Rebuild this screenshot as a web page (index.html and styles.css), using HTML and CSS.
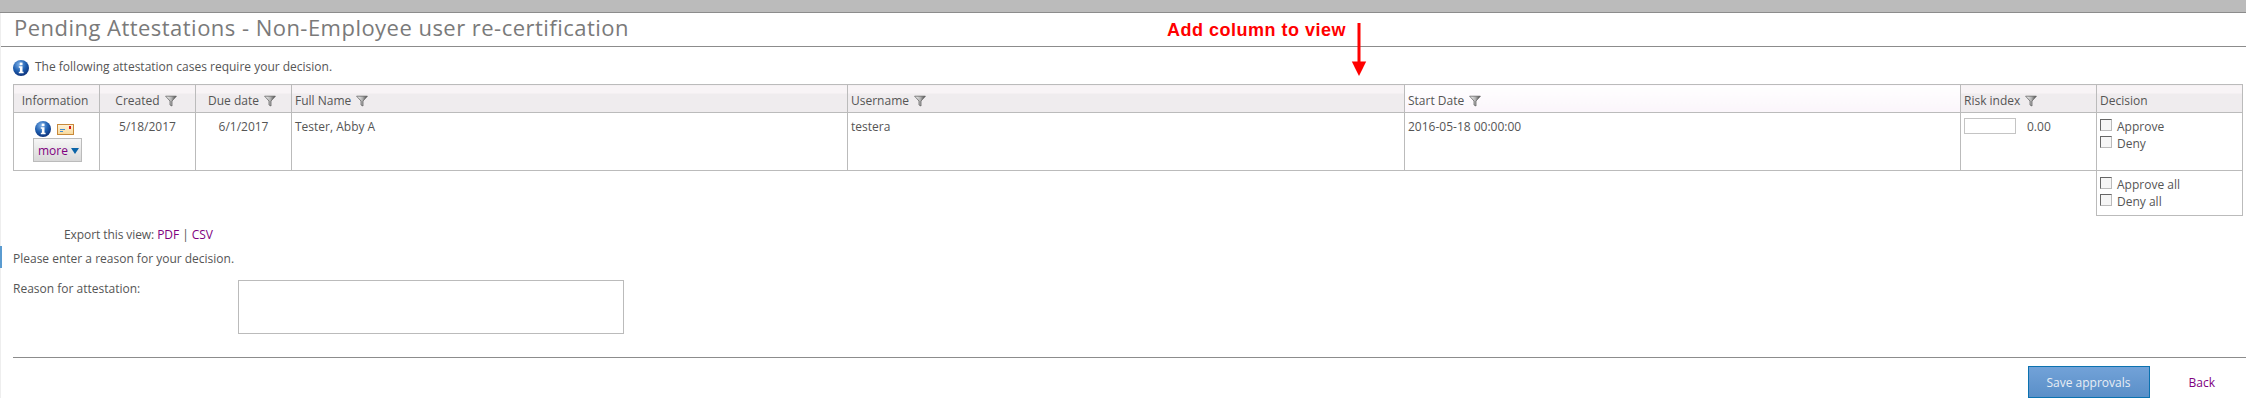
FILE: index.html
```html
<!DOCTYPE html>
<html lang="en">
<head>
  <meta charset="UTF-8">
  <title>Pending Attestations</title>
  <link rel="stylesheet" href="styles.css">
</head>
<body>

  <div class="topbar"></div>

  <div class="page">
    <h1 class="title">Pending Attestations - Non-Employee user re-certification</h1>

    <div class="annotation">
      <span class="annotation-text">Add column to view</span>
      <svg class="annotation-arrow" width="16" height="54" viewBox="0 0 16 54">
        <rect x="6.5" y="0" width="3" height="40" fill="#f00"/>
        <path d="M0.8 38.5H15.2L8 53Z" fill="#f00"/>
      </svg>
    </div>

    <p class="intro">
      <svg class="info-icon" width="16" height="16" viewBox="0 0 16 16">
        <use href="#info"/>
      </svg>
      The following attestation cases require your decision.
    </p>

    <table class="cases">
      <colgroup>
        <col class="col-info">
        <col class="col-date">
        <col class="col-date">
        <col class="col-name">
        <col class="col-user">
        <col class="col-start">
        <col class="col-risk">
        <col class="col-decision">
      </colgroup>
      <thead>
        <tr>
          <th class="center">Information</th>
          <th class="center">Created <svg class="filter" width="12" height="12" viewBox="0 0 12 12"><use href="#funnel"/></svg></th>
          <th class="center">Due date <svg class="filter" width="12" height="12" viewBox="0 0 12 12"><use href="#funnel"/></svg></th>
          <th>Full Name <svg class="filter" width="12" height="12" viewBox="0 0 12 12"><use href="#funnel"/></svg></th>
          <th>Username <svg class="filter" width="12" height="12" viewBox="0 0 12 12"><use href="#funnel"/></svg></th>
          <th class="head-light">Start Date <svg class="filter" width="12" height="12" viewBox="0 0 12 12"><use href="#funnel"/></svg></th>
          <th>Risk index <svg class="filter" width="12" height="12" viewBox="0 0 12 12"><use href="#funnel"/></svg></th>
          <th>Decision</th>
        </tr>
      </thead>
      <tbody>
        <tr class="case-row">
          <td class="center">
            <div class="info-icons">
              <svg width="16" height="16" viewBox="0 0 16 16"><use href="#info"/></svg>
              <svg width="17" height="11" viewBox="0 0 17 11">
                <defs>
                  <linearGradient id="env-fill" x1="0" y1="0" x2="0" y2="1">
                    <stop offset="0" stop-color="#fdf3dc"/>
                    <stop offset="1" stop-color="#f8d898"/>
                  </linearGradient>
                </defs>
                <rect x="0.5" y="0.5" width="16" height="10" fill="url(#env-fill)" stroke="#c8893a"/>
                <rect x="12" y="2" width="2" height="3" fill="#d81818"/>
                <rect x="3" y="5" width="5" height="1" fill="#3d8ad0"/>
                <rect x="3" y="7" width="3" height="1" fill="#3d8ad0"/>
              </svg>
            </div>
            <button class="more" type="button">more <span class="more-caret"></span></button>
          </td>
          <td class="center">5/18/2017</td>
          <td class="center">6/1/2017</td>
          <td>Tester, Abby A</td>
          <td>testera</td>
          <td>2016-05-18 00:00:00</td>
          <td><input class="risk-input" type="text"><span class="risk-value">0.00</span></td>
          <td>
            <label class="check"><input type="checkbox"> Approve</label>
            <label class="check"><input type="checkbox"> Deny</label>
          </td>
        </tr>
        <tr class="all-row">
          <td class="blank" colspan="7"></td>
          <td>
            <label class="check"><input type="checkbox"> Approve all</label>
            <label class="check"><input type="checkbox"> Deny all</label>
          </td>
        </tr>
      </tbody>
    </table>

    <p class="export">Export this view: <a href="#">PDF</a> | <a href="#">CSV</a></p>
    <p class="reason-note">Please enter a reason for your decision.</p>

    <div class="reason">
      <label class="reason-label" for="reason">Reason for attestation:</label>
      <textarea class="reason-box" id="reason"></textarea>
    </div>

    <div class="actions">
      <button class="save" type="button">Save approvals</button>
      <a class="back" href="#">Back</a>
    </div>
  </div>

  <!-- icons used more than once -->
  <svg class="defs" width="0" height="0">
    <defs>
      <radialGradient id="info-fill" cx="40%" cy="28%" r="75%">
        <stop offset="0" stop-color="#7db0e8"/>
        <stop offset="0.55" stop-color="#1f5fb0"/>
        <stop offset="1" stop-color="#0c2f78"/>
      </radialGradient>
      <linearGradient id="funnel-fill" x1="0" y1="0" x2="1" y2="0">
        <stop offset="0" stop-color="#fff"/>
        <stop offset="0.55" stop-color="#b0b0b0"/>
        <stop offset="1" stop-color="#444"/>
      </linearGradient>
      <symbol id="info" viewBox="0 0 16 16">
        <circle cx="8" cy="8" r="8" fill="url(#info-fill)"/>
        <rect x="6.7" y="2.6" width="2.8" height="2.6" fill="#fff"/>
        <path d="M5.8 6.3H9.5V11.8H10.6V13.2H5.8V11.8H6.9V7.7H5.8Z" fill="#fff"/>
      </symbol>
      <symbol id="funnel" viewBox="0 0 12 12">
        <path d="M0.6 1.2H11.4L7 6V11L5 10V6Z" fill="url(#funnel-fill)" stroke="#555" stroke-width="0.7"/>
      </symbol>
    </defs>
  </svg>

</body>
</html>
```

FILE: styles.css
```css
html, body { margin: 0; padding: 0; background: #fff; }
body { font-family: "Open Sans", sans-serif; font-size: 12px; color: #555; height: 416px; overflow: hidden; }
a { color: #800080; text-decoration: none; }
p { margin: 0; }

.topbar { height: 12px; background: #bbb; border-bottom: 1px solid #8c8c8c; }

.page { position: relative; border-left: 1px solid #eee; padding-right: 4px; }

.title {
  margin: 0 -4px 0 0;
  padding: 1px 0 0 13px;
  height: 32px;
  font-size: 22px;
  line-height: 26px;
  font-weight: 400;
  letter-spacing: 0.47px;
  color: #7a7a7a;
  border-bottom: 1px solid #8c8c8c;
}

.annotation { position: absolute; left: 1166px; top: 10px; display: flex; align-items: flex-start; }
.annotation-text {
  width: 184px;
  margin-top: -2px;
  font-family: "Liberation Sans", Arial, sans-serif;
  font-size: 18px;
  line-height: 18px;
  font-weight: bold;
  letter-spacing: 0.5px;
  color: #f00;
  white-space: nowrap;
}

.intro { display: flex; align-items: center; gap: 6px; height: 16px; margin: 12px 0 0 12px; line-height: 16px; }
.info-icon { margin-top: 2px; }

.cases {
  border-collapse: collapse;
  table-layout: fixed;
  width: 2229px;
  margin: 9px 0 0 12px;
}
.col-info { width: 86px; }
.col-date { width: 96px; }
.col-name { width: 556px; }
.col-user { width: 557px; }
.col-start { width: 556px; }
.col-risk { width: 136px; }
.col-decision { width: 146px; }

.cases th, .cases td { border: 1px solid #bbb; padding: 0 3px; vertical-align: top; }
.cases th {
  height: 24px;
  padding-top: 3px;
  font-weight: 400;
  text-align: left;
  vertical-align: middle;
  background: linear-gradient(#f8f4f6 0, #f8f4f6 8px, #efecee 8px, #efecee 100%);
}
.cases th.center { padding-right: 6px; }
.cases th.head-light { background: linear-gradient(#fff, #fbf5fb); }
.cases td { padding-top: 5px; line-height: 17px; }
.cases .center { text-align: center; }
.cases .blank { border: none; border-top: 1px solid #bbb; }
.filter { vertical-align: -2px; margin-left: 2px; }

.case-row td { height: 52px; }
.all-row td { height: 39px; }

.info-icons { display: flex; align-items: center; gap: 6px; height: 16px; margin: 3px 0 0 18px; }
.more {
  display: block;
  width: 49px;
  height: 24px;
  margin: 1px 0 0 16px;
  padding: 0 0 0 2px;
  font-family: "Open Sans", sans-serif;
  font-size: 12px;
  color: #800080;
  background: linear-gradient(#f6f6f6, #d8d8d8);
  border: 1px solid #bbb;
}
.more-caret {
  display: inline-block;
  border-left: 4px solid transparent;
  border-right: 4px solid transparent;
  border-top: 6px solid #0a64a8;
  vertical-align: 1px;
}

.risk-input { width: 50px; height: 14px; padding: 0; border: 1px solid #c4c4c4; margin: 0; vertical-align: top; }
.risk-value { margin-left: 11px; }

.check { display: flex; align-items: center; gap: 4px; height: 17px; }
.check input { width: 12px; height: 12px; margin: 0 1px 3px 0; appearance: none; background: #f6f6f6; border: 1px solid #bbb; border-top-color: #666; border-left-color: #666; }

.export { margin: 10px 0 0 63px; line-height: 17px; letter-spacing: -0.08px; }
.reason-note {
  height: 18px;
  margin: 3px 0 0 -1px;
  padding: 4px 0 0 11px;
  line-height: 18px;
  border-left: 2px solid #5a9bd0;
}

.reason { display: flex; margin: 12px 0 0 12px; }
.reason-label { width: 225px; padding-top: 1px; line-height: 15px; }
.reason-box { width: 384px; height: 52px; padding: 0; margin: 0; border: 1px solid #bbb; resize: none; display: block; }

.actions {
  display: flex;
  justify-content: flex-end;
  align-items: center;
  margin: 23px -4px 0 12px;
  padding: 8px 31px 0 0;
  border-top: 1px solid #8c8c8c;
}
.save {
  width: 122px;
  height: 32px;
  padding: 0;
  font-family: "Open Sans", sans-serif;
  font-size: 12px;
  color: #e8eef5;
  background: linear-gradient(#72a2d8, #5a8fc8);
  border: 1px solid #0b72b0;
}
.back { margin-left: 39px; }
.defs { position: absolute; }
```
